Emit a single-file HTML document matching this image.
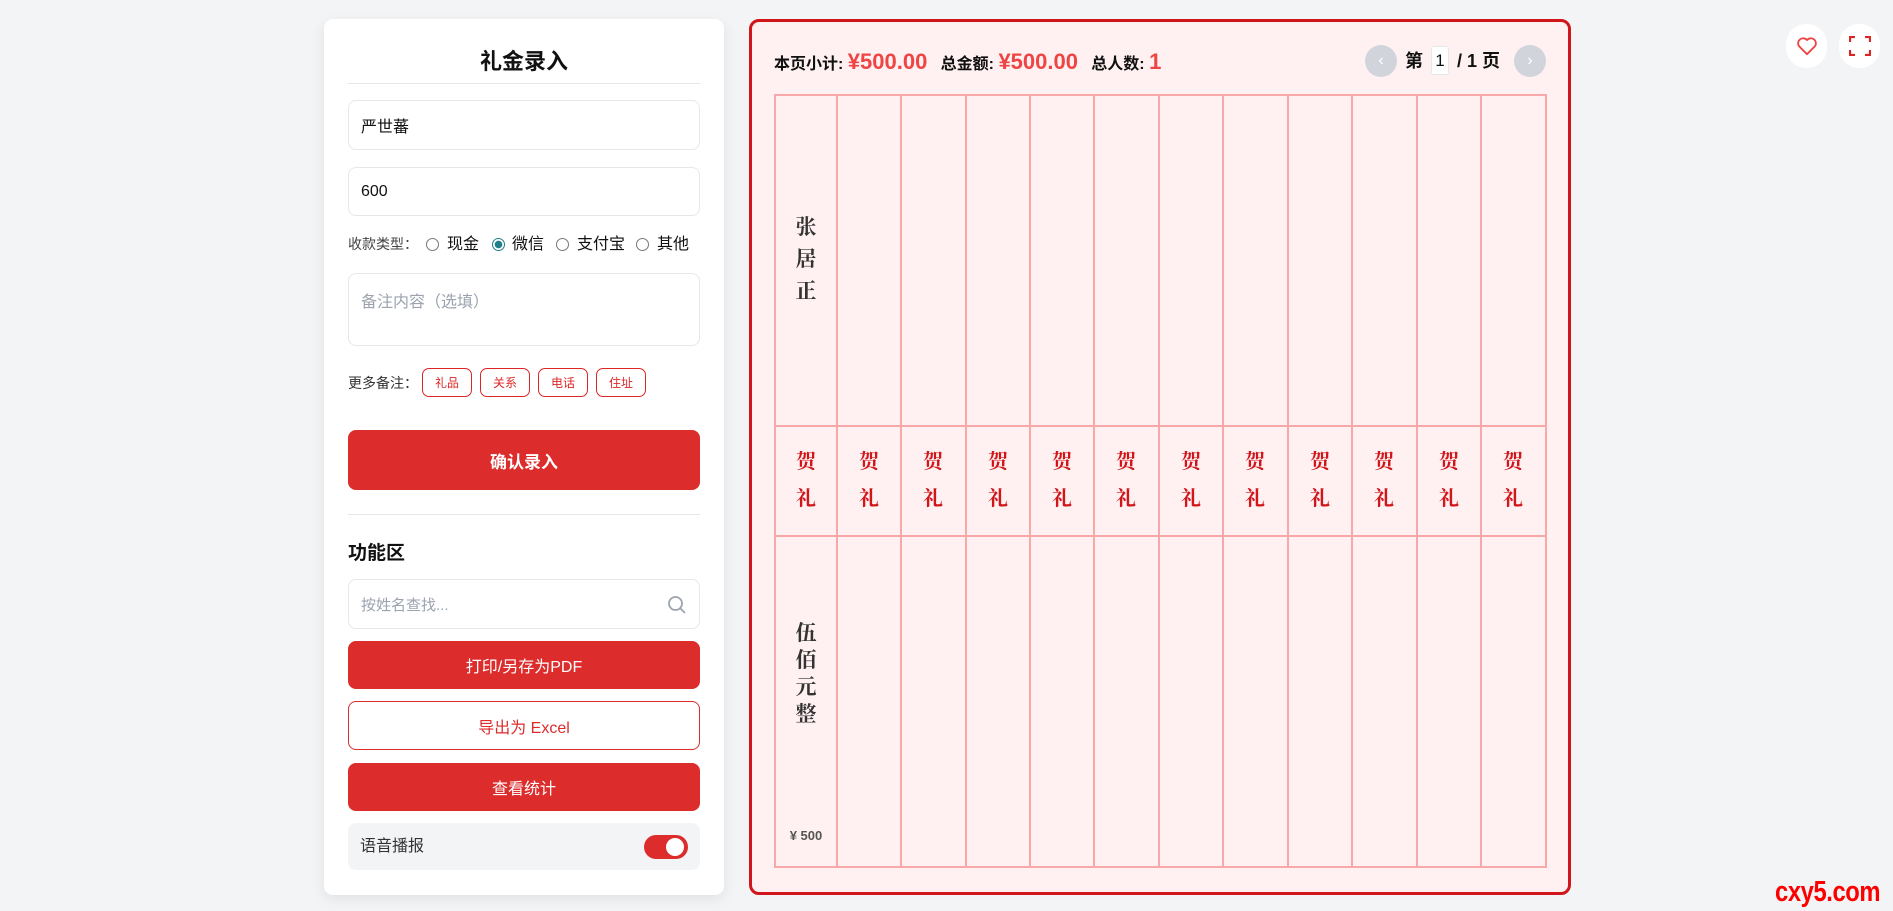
<!DOCTYPE html>
<html><head><meta charset="utf-8">
<style>
*{box-sizing:border-box;margin:0;padding:0}
body{width:1893px;height:911px;background:#f3f4f6;font-family:"Liberation Sans","Noto Sans CJK SC",sans-serif;position:relative;overflow:hidden;color:#111}
.card{position:absolute;left:324px;top:19px;width:400px;height:876px;background:#fff;border-radius:9px;box-shadow:0 4px 14px rgba(0,0,0,.08)}
.abs{position:absolute}
.title{left:0;width:400px;top:28px;text-align:center;font-size:22px;font-weight:bold;line-height:30px}
.hr{left:24px;width:352px;height:1px;background:#e5e7eb}
.inp{left:24px;width:352px;border:1px solid #e5e7eb;border-radius:8px;padding-left:12px;font-size:16px;display:flex;align-items:center;color:#111}
.tag{top:349px;height:29px;width:50px;border:1px solid #dc2626;border-radius:7px;color:#dc2626;font-size:12px;display:flex;align-items:center;justify-content:center}
.btn{left:24px;width:352px;border-radius:8px;background:#dc2c2c;color:#fff;font-size:16px;display:flex;align-items:center;justify-content:center}
.radio{width:13px;height:13px;border:1px solid #777;border-radius:50%;top:219px}
.rt{top:214px;font-size:16px;line-height:24px}
.panel{position:absolute;left:749px;top:19px;width:822px;height:876px;background:#fff1f1;border:3px solid #d0161b;border-radius:10px}
.grid{position:absolute;left:774px;top:94px;width:773px;height:774px;border:2px solid #f8a8a8}
.vl{position:absolute;top:94px;width:2px;height:774px;background:#f8a8a8}
.hl{position:absolute;left:774px;width:773px;height:2px;background:#f8a8a8}
.he{position:absolute;width:64px;text-align:center;color:#d0161b;font-family:"Noto Serif CJK SC",serif;font-weight:bold;font-size:20px;line-height:37px;top:441px}
.vt{position:absolute;left:775px;width:62px;text-align:center;color:#333;font-family:"Noto Serif CJK SC",serif;font-weight:bold;font-size:21px}
.circ{position:absolute;width:32px;height:32px;border-radius:50%;background:#d1d5db;color:#fff;font-size:16px;display:flex;align-items:center;justify-content:center;top:45px}
.ib{position:absolute;top:24px;width:41px;height:44px;border-radius:20px;background:#fff;display:flex;align-items:center;justify-content:center}
</style></head><body>
<div class="card">
 <div class="abs title">礼金录入</div>
 <div class="abs hr" style="top:64px"></div>
 <div class="abs inp" style="top:81px;height:50px">严世蕃</div>
 <div class="abs inp" style="top:148px;height:49px">600</div>
 <div class="abs" style="left:24px;top:214px;font-size:14px;color:#444;line-height:22px">收款类型：</div>
 <div class="abs radio" style="left:102px"></div><div class="abs rt" style="left:123px">现金</div>
 <div class="abs radio" style="left:168px;border-color:#1f7f8a;background:radial-gradient(circle,#1f7f8a 0 3.5px,#fff 4px)"></div><div class="abs rt" style="left:188px">微信</div>
 <div class="abs radio" style="left:232px"></div><div class="abs rt" style="left:253px">支付宝</div>
 <div class="abs radio" style="left:312px"></div><div class="abs rt" style="left:333px">其他</div>
 <div class="abs inp" style="top:254px;height:73px;align-items:flex-start;padding-top:14px;color:#9ca3af">备注内容（选填）</div>
 <div class="abs" style="left:24px;top:354px;font-size:14px;color:#333;line-height:20px">更多备注：</div>
 <div class="abs tag" style="left:98px">礼品</div>
 <div class="abs tag" style="left:156px">关系</div>
 <div class="abs tag" style="left:214px">电话</div>
 <div class="abs tag" style="left:272px">住址</div>
 <div class="abs btn" style="top:411px;height:60px;font-weight:bold;font-size:17px">确认录入</div>
 <div class="abs hr" style="top:495px"></div>
 <div class="abs" style="left:24px;top:522px;font-size:19px;font-weight:bold;line-height:26px">功能区</div>
 <div class="abs inp" style="top:560px;height:50px;color:#9ca3af;font-size:15px">按姓名查找...
  <svg style="position:absolute;right:12px;top:15px" width="20" height="20" viewBox="0 0 20 20" fill="none" stroke="#9ca3af" stroke-width="1.8"><circle cx="8.5" cy="8.5" r="6.5"/><path d="M13.5 13.5 L18 18"/></svg></div>
 <div class="abs btn" style="top:622px;height:48px">打印/另存为PDF</div>
 <div class="abs btn" style="top:682px;height:49px;background:#fff;border:1.5px solid #dc2c2c;color:#dc2c2c">导出为 Excel</div>
 <div class="abs btn" style="top:744px;height:48px">查看统计</div>
 <div class="abs" style="left:24px;top:804px;width:352px;height:47px;background:#f3f4f6;border-radius:8px">
  <div class="abs" style="left:12px;top:13px;font-size:16px;color:#333;line-height:22px">语音播报</div>
  <div class="abs" style="left:296px;top:12px;width:44px;height:24px;border-radius:12px;background:#dc2c2c"><div class="abs" style="left:22px;top:3px;width:18px;height:18px;border-radius:50%;background:#fff"></div></div>
 </div>
</div>

<div class="panel"></div>
<div class="abs" style="left:774px;top:50px;font-size:16px;font-weight:bold;line-height:24px;white-space:nowrap">本页小计: <span style="color:#ef4444;font-size:22px">¥500.00</span>&nbsp;&nbsp;&nbsp;总金额: <span style="color:#ef4444;font-size:22px">¥500.00</span>&nbsp;&nbsp;&nbsp;总人数: <span style="color:#ef4444;font-size:22px">1</span></div>
<div class="circ" style="left:1365px">‹</div>
<div class="abs" style="left:1405px;top:49px;font-size:18px;font-weight:bold;line-height:24px">第</div>
<div class="abs" style="left:1431px;top:46px;width:18px;height:29px;border:1px solid #e5e7eb;border-radius:3px;background:#fff;font-size:17px;text-align:center;line-height:27px">1</div>
<div class="abs" style="left:1457px;top:49px;font-size:18px;font-weight:bold;line-height:24px">/ 1 页</div>
<div class="circ" style="left:1514px">›</div>

<div class="grid"></div>
<div class="hl" style="top:425px"></div>
<div class="hl" style="top:535px"></div>
<div class="vl" style="left:836px"></div><div class="vl" style="left:900px"></div><div class="vl" style="left:965px"></div><div class="vl" style="left:1029px"></div><div class="vl" style="left:1093px"></div><div class="vl" style="left:1158px"></div><div class="vl" style="left:1222px"></div><div class="vl" style="left:1287px"></div><div class="vl" style="left:1351px"></div><div class="vl" style="left:1416px"></div><div class="vl" style="left:1480px"></div>
<div class="he" style="left:774px">贺<br>礼</div><div class="he" style="left:837px">贺<br>礼</div><div class="he" style="left:901px">贺<br>礼</div><div class="he" style="left:966px">贺<br>礼</div><div class="he" style="left:1030px">贺<br>礼</div><div class="he" style="left:1094px">贺<br>礼</div><div class="he" style="left:1159px">贺<br>礼</div><div class="he" style="left:1223px">贺<br>礼</div><div class="he" style="left:1288px">贺<br>礼</div><div class="he" style="left:1352px">贺<br>礼</div><div class="he" style="left:1417px">贺<br>礼</div><div class="he" style="left:1481px">贺<br>礼</div>
<div class="vt" style="top:210px;line-height:32px">张<br>居<br>正</div>
<div class="vt" style="top:619px;line-height:27px">伍<br>佰<br>元<br>整</div>
<div class="abs" style="left:775px;width:62px;text-align:center;top:828px;font-size:13px;font-weight:bold;color:#555">¥ 500</div>

<div class="ib" style="left:1786px"><svg width="22" height="20" viewBox="0 0 24 22" fill="none" stroke="#ef4444" stroke-width="2"><path d="M12 20 L3.5 11.5 A5 5 0 0 1 12 4.5 A5 5 0 0 1 20.5 11.5 Z" stroke-linejoin="round"/></svg></div>
<div class="ib" style="left:1839px"><svg width="22" height="20" viewBox="0 0 22 20" fill="none" stroke="#dc2626" stroke-width="2.2"><path d="M1 6V1H6M16 1H21V6M21 14V19H16M6 19H1V14"/></svg></div>
<div class="abs" style="left:1775px;top:877px;font-size:29px;font-weight:bold;color:#ff0000;line-height:30px;letter-spacing:-0.5px;transform:scaleX(0.82);transform-origin:0 0;white-space:nowrap">cxy5.com</div>
</body></html>
